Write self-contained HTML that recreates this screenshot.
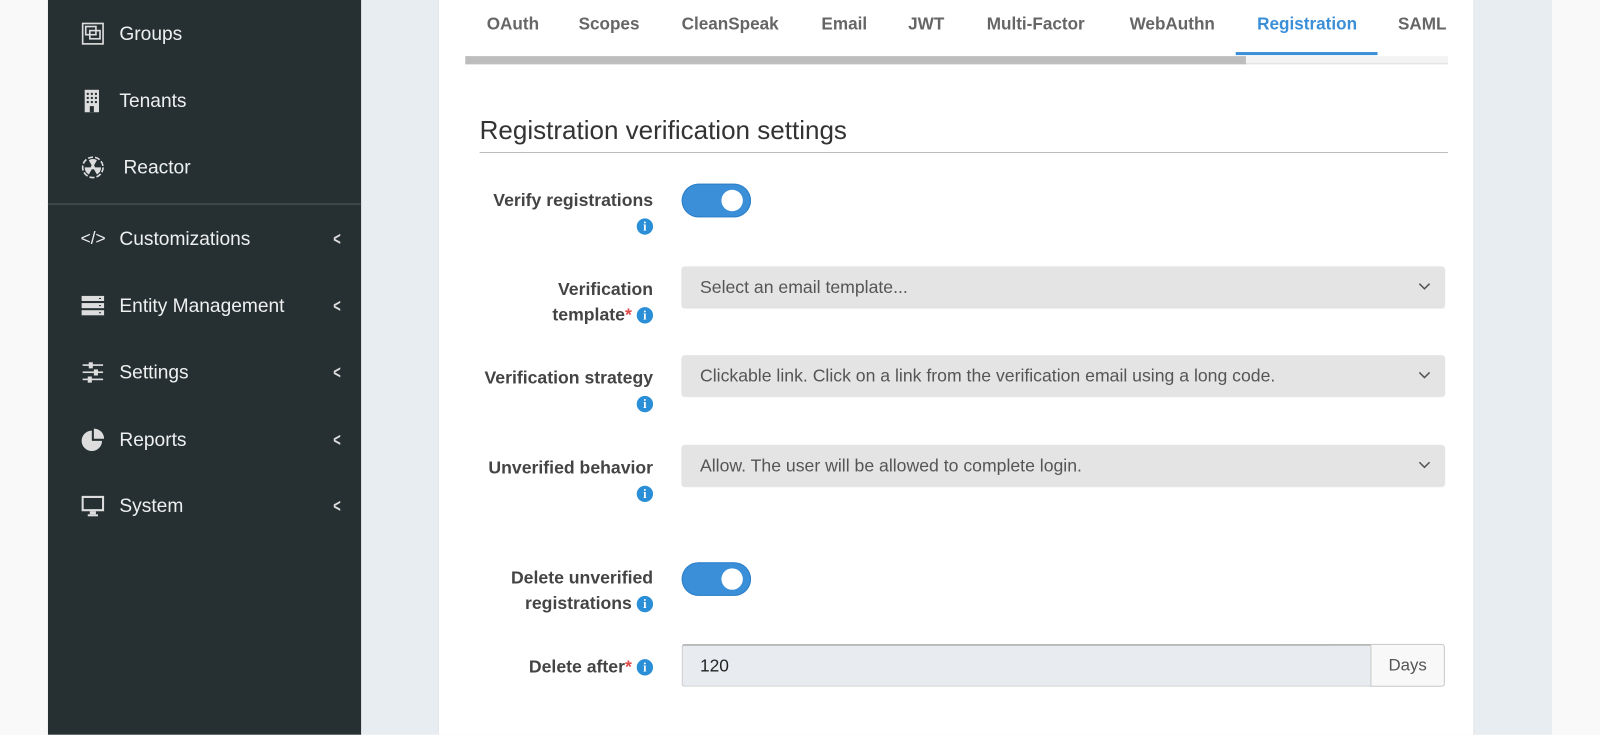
<!DOCTYPE html>
<html><head><meta charset="utf-8"><style>
*{box-sizing:border-box;margin:0;padding:0}
body{width:1600px;height:720px;overflow:hidden;background:#f9f9f9;font-family:"Liberation Sans",sans-serif;position:relative}
#wrap{position:absolute;left:0;top:0;width:1568px;height:706px;transform:scale(1.0204);transform-origin:0 0}
.abs{position:absolute}
#side{left:47px;top:0;width:307px;height:720px;background:#263033}
.nav{position:absolute;left:117px;font-size:18.8px;color:#eef0f0;line-height:22px}
.ico{position:absolute;left:79px;width:24px;height:24px}
.chev{position:absolute;left:325px;font-size:18px;font-weight:bold;color:#ddd;transform:scaleX(.7)}
#main{left:354px;top:0;width:1167px;height:720px;background:#e8edf1}
#card{left:429px;top:0;width:1016px;height:720px;background:#fff;border-left:1px solid #dde2e6;border-right:1px solid #dde2e6}
.tab{position:absolute;top:14px;font-size:16.8px;color:#666;font-weight:bold}
.lbl{position:absolute;right:928px;text-align:right;font-size:17.3px;font-weight:bold;color:#444;line-height:25px}
.info{display:inline-block;width:16px;height:16px;border-radius:50%;background:#2a8fd6;color:#fff;font-size:12px;font-family:"Liberation Serif",serif;font-weight:bold;text-align:center;line-height:16px;vertical-align:1px}
.req{color:#e04a4a}
.sel{position:absolute;left:668px;width:748px;height:40px;background:#e4e4e4;border-radius:3px;box-shadow:0 1px 1px rgba(0,0,0,.12);font-size:17.3px;color:#555;padding-left:18px;line-height:40px}
.sel svg{position:absolute;right:14px;top:16px}
.tog{position:absolute;left:668px;width:68px;height:33px;border-radius:17px;background:#3a8fd8;box-shadow:inset 0 0 0 1px #2e7fc6}
.tog::after{content:"";position:absolute;right:8px;top:6px;width:21px;height:21px;border-radius:50%;background:#fff}
</style></head><body><div id="wrap">
<div id="side" class="abs">
<div style="position:absolute;left:0;top:199px;width:307px;height:2px;background:#3d474a"></div>
</div>
<svg class="ico" style="top:21px" viewBox="0 0 24 24" fill="none" stroke="#ddd" stroke-width="1.6"><rect x="2" y="2" width="20" height="20"/><rect x="5" y="5" width="10" height="8"/><rect x="9" y="9" width="10" height="8"/></svg>
<div class="nav" style="top:22px">Groups</div>
<svg class="ico" style="top:87px" viewBox="0 0 24 24"><rect x="4" y="1" width="14" height="22" fill="#ddd"/><g fill="#263033"><rect x="6" y="4" width="2" height="2"/><rect x="10" y="4" width="2" height="2"/><rect x="14" y="4" width="2" height="2"/><rect x="6" y="8" width="2" height="2"/><rect x="10" y="8" width="2" height="2"/><rect x="14" y="8" width="2" height="2"/><rect x="6" y="12" width="2" height="2"/><rect x="10" y="12" width="2" height="2"/><rect x="14" y="12" width="2" height="2"/><rect x="9" y="17" width="4" height="6"/></g></svg>
<div class="nav" style="top:88px">Tenants</div>
<svg class="ico" style="top:152px" viewBox="0 0 24 24"><circle cx="12" cy="12" r="10" fill="none" stroke="#ddd" stroke-width="1.6" stroke-dasharray="5 2"/><circle cx="12" cy="12" r="2" fill="#ddd"/><path d="M12 12 L8 5 A8 8 0 0 1 16 5Z M12 12 L20 12 A8 8 0 0 1 16 19Z M12 12 L8 19 A8 8 0 0 1 4 12Z" fill="#ddd"/></svg>
<div class="nav" style="top:153px;left:121px">Reactor</div>
<div class="nav" style="top:223px;left:79px;font-size:17px">&lt;/&gt;</div>
<div class="nav" style="top:223px">Customizations</div><div class="chev" style="top:224px">&lt;</div>
<svg class="ico" style="top:288px" viewBox="0 0 24 24" fill="#ddd"><rect x="1" y="2" width="22" height="5"/><rect x="1" y="9" width="22" height="5"/><rect x="1" y="16" width="22" height="5"/><g fill="#263033"><rect x="18" y="4" width="2" height="1"/><rect x="18" y="11" width="2" height="1"/><rect x="18" y="18" width="2" height="1"/></g></svg>
<div class="nav" style="top:289px">Entity Management</div><div class="chev" style="top:290px">&lt;</div>
<svg class="ico" style="top:353px" viewBox="0 0 24 24" fill="#ddd"><rect x="2" y="4" width="20" height="1.6"/><rect x="2" y="11" width="20" height="1.6"/><rect x="2" y="18" width="20" height="1.6"/><rect x="8" y="2" width="4" height="6"/><rect x="13" y="9" width="4" height="6"/><rect x="7" y="16" width="4" height="6"/></svg>
<div class="nav" style="top:354px">Settings</div><div class="chev" style="top:355px">&lt;</div>
<svg class="ico" style="top:419px" viewBox="0 0 24 24" fill="#ddd"><path d="M11 3 A10 10 0 1 0 21 13 L11 13Z"/><path d="M13 1 A10 10 0 0 1 23 11 L13 11Z"/></svg>
<div class="nav" style="top:420px">Reports</div><div class="chev" style="top:421px">&lt;</div>
<svg class="ico" style="top:484px" viewBox="0 0 24 24" fill="#ddd"><path d="M1 2h22v15H1z M3 4v11h18V4z" fill-rule="evenodd"/><rect x="9" y="17" width="6" height="3"/><rect x="7" y="20" width="10" height="2"/></svg>
<div class="nav" style="top:485px">System</div><div class="chev" style="top:486px">&lt;</div>

<div id="main" class="abs"></div>
<div id="card" class="abs"></div>
<div class="tab" style="left:477px">OAuth</div>
<div class="tab" style="left:567px">Scopes</div>
<div class="tab" style="left:668px">CleanSpeak</div>
<div class="tab" style="left:805px">Email</div>
<div class="tab" style="left:890px">JWT</div>
<div class="tab" style="left:967px">Multi-Factor</div>
<div class="tab" style="left:1107px">WebAuthn</div>
<div class="tab" style="left:1232px;color:#3a8fd8">Registration</div>
<div class="tab" style="left:1370px">SAML</div>
<div class="abs" style="left:1211px;top:51px;width:139px;height:3px;background:#3a8fd8"></div>
<div class="abs" style="left:456px;top:55px;width:963px;height:8px;background:#f3f3f3;border-bottom:1px solid #ddd"></div>
<div class="abs" style="left:456px;top:55px;width:765px;height:8px;background:#bdbdbd"></div>
<div class="abs" style="left:470px;top:114px;font-size:25.5px;color:#333">Registration verification settings</div>
<div class="abs" style="left:470px;top:149px;width:949px;height:1px;background:#bbb"></div>

<div class="lbl" style="top:184px">Verify registrations<br><span class="info">i</span></div>
<div class="tog" style="top:180px"></div>
<div class="lbl" style="top:271px">Verification<br>template<span class="req">*</span> <span class="info">i</span></div>
<div class="sel" style="top:261px">Select an email template...<svg width="12" height="8" viewBox="0 0 12 8"><path d="M1 1l5 5 5-5" fill="none" stroke="#555" stroke-width="1.5"/></svg></div>
<div class="lbl" style="top:358px">Verification strategy<br><span class="info">i</span></div>
<div class="sel" style="top:348px">Clickable link. Click on a link from the verification email using a long code.<svg width="12" height="8" viewBox="0 0 12 8"><path d="M1 1l5 5 5-5" fill="none" stroke="#555" stroke-width="1.5"/></svg></div>
<div class="lbl" style="top:446px">Unverified behavior<br><span class="info">i</span></div>
<div class="sel" style="top:436px">Allow. The user will be allowed to complete login.<svg width="12" height="8" viewBox="0 0 12 8"><path d="M1 1l5 5 5-5" fill="none" stroke="#555" stroke-width="1.5"/></svg></div>
<div class="lbl" style="top:554px">Delete unverified<br>registrations <span class="info">i</span></div>
<div class="tog" style="top:551px"></div>
<div class="lbl" style="top:641px">Delete after<span class="req">*</span> <span class="info">i</span></div>
<div class="abs" style="left:668px;top:631px;width:676px;height:42px;background:#e8ecf0;border:1px solid #c8c8c8;border-top:2px solid #b8b8b8;border-radius:3px 0 0 3px;font-size:17px;color:#222;padding-left:17px;line-height:40px">120</div>
<div class="abs" style="left:1343px;top:631px;width:73px;height:42px;background:#f8f8f8;border:1px solid #c8c8c8;border-radius:0 3px 3px 0;font-size:16.5px;color:#555;text-align:center;line-height:40px">Days</div>
</div></body></html>
